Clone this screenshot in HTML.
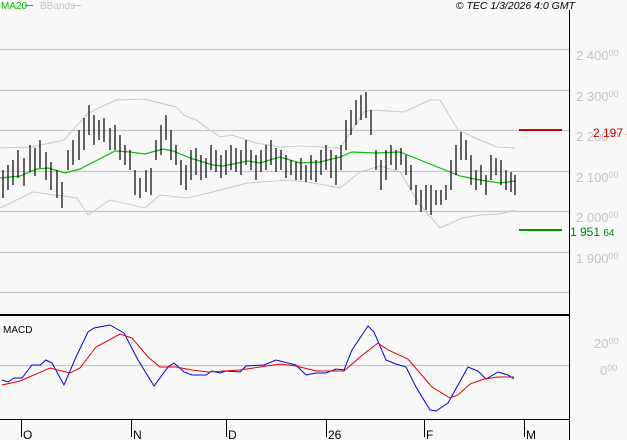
<!DOCTYPE html>
<html><head><meta charset="utf-8"><style>
body{margin:0;width:627px;height:440px;background:#f8f8f8;overflow:hidden;font-family:"Liberation Sans",sans-serif}
svg{position:absolute;left:0;top:0}
</style></head><body>
<svg width="627" height="440" viewBox="0 0 627 440">
<rect width="627" height="440" fill="#f8f8f8"/>
<g stroke="#c8c8c8" stroke-width="1.3">
<line x1="0" y1="49.5" x2="569" y2="49.5"/><line x1="0" y1="90.5" x2="569" y2="90.5"/>
<line x1="0" y1="130.5" x2="569" y2="130.5"/><line x1="0" y1="171.5" x2="569" y2="171.5"/>
<line x1="0" y1="211.5" x2="569" y2="211.5"/><line x1="0" y1="252.5" x2="569" y2="252.5"/>
<line x1="0" y1="292.5" x2="569" y2="292.5"/><line x1="0" y1="365.5" x2="569" y2="365.5"/>
</g>
<g fill="none" stroke="#c8c8c8" stroke-width="1">
<polyline points="0,148 32,147 64,140 88,113 116,100 144,99 160,103 176,107 184,115 196,120 220,137 232,135 256,143 280,147 304,146 340,148 350,133 364,112 372,110 404,112 430,100 440,100 458,130 480,140 497,147 515,148"/>
<polyline points="0,208 33,192 77,198 88,215 110,200 145,208 160,195 187,198 213,192 247,183 290,180 320,184 340,188 360,172 380,166 400,172 420,205 440,228 462,218 480,215 500,214 515,210"/>
</g>
<polyline fill="none" stroke="#11bb11" stroke-width="1.2" points="0,178 20,176 37,169 48,168 65,173 80,169 115,151 130,152 145,154 163,149 173,151 193,159 213,165 223,166 248,161 260,163 280,157 300,163 320,162 340,157 352,152 375,153 400,152 420,160 440,168 460,176 480,180 500,183 515,181"/>
<g stroke="#000" stroke-width="1.2" fill="none">
<path d="M3 170V198M8 165V190M13 160V185M18 150V178M24 158V186M30 145V172M35 148V176M40 140V168M46 152V180M51 162V190M57 170V198M62 182V208M68 150V170M73 140V165M79 130V160M84 118V150M89 105V135M94 115V145M99 120V140M104 118V142M110 128V150M115 125V150M120 135V160M125 145V165M130 150V170M135 170V195M140 178V198M146 170V192M151 168V195M156 140V160M161 125V155M166 115V140M171 130V160M176 145V165M181 160V185M186 165V190M191 150V180M196 148V175M201 155V180M206 158V178M211 145V170M216 150V172M221 155V178M226 150V175M231 145V170M236 148V172M241 150V175M246 140V165M251 150V170M256 155V180M261 150V172M266 145V170M271 140V165M276 148V172M281 150V170M286 155V178M291 160V175M296 162V180M301 158V180M306 165V182M311 155V180M316 160V182M321 150V175M326 145V170M331 150V178M336 155V185M341 145V170M346 120V150M351 110V135M356 100V125M361 95V120M366 92V118M371 110V135M376 150V170M381 160V190M386 150V180M391 145V165M396 150V170M401 148V165M406 155V175M411 165V190M416 185V205M421 190V212M426 185V210M431 185V215M436 190V205M441 190V205M446 185V200M451 160V190M456 145V175M461 132V160M466 140V160M471 155V185M476 170V190M481 165V185M486 175V195M491 155V180M496 158V175M501 160V185M506 170V190M511 172V192M515 175V195"/>
</g>
<line x1="519" y1="130" x2="562" y2="130" stroke="#cc0000" stroke-width="2"/>
<line x1="519" y1="230" x2="562" y2="230" stroke="#009900" stroke-width="2"/>
<line x1="569.5" y1="10" x2="569.5" y2="440" stroke="#000" stroke-width="1"/>
<line x1="0" y1="315" x2="569" y2="315" stroke="#000" stroke-width="2"/>
<line x1="0" y1="419.5" x2="569" y2="419.5" stroke="#000" stroke-width="1"/>
<polyline fill="none" stroke="#0000dd" stroke-width="1" points="2,380 8,382 14,378 22,378 32,365 40,365 46,360 52,363 64,385 76,357 88,332 94,328 110,325 124,333 138,360 154,386 168,367 174,363 184,372 192,375 206,375 212,371 220,373 226,371 240,372 246,366 264,365 276,360 288,363 296,365 306,375 316,373 326,373 336,369 344,370 352,350 368,326 374,332 386,360 396,364 406,367 416,387 430,410 436,411 448,403 468,367 478,371 486,379 498,372 508,375 514,379"/>
<polyline fill="none" stroke="#dd0000" stroke-width="1" points="2,385 20,381 50,368 70,373 80,368 96,347 120,334 132,338 148,357 160,367 176,367 192,370 208,372 240,370 280,364 296,366 316,371 344,371 360,357 378,343 388,350 408,359 432,387 450,398 458,395 470,384 484,379 498,377 514,377"/>
<g stroke="#000" stroke-width="1">
<line x1="21.5" y1="419" x2="21.5" y2="437"/><line x1="131.5" y1="419" x2="131.5" y2="437"/>
<line x1="226.5" y1="419" x2="226.5" y2="437"/><line x1="326.5" y1="419" x2="326.5" y2="437"/>
<line x1="424.5" y1="419" x2="424.5" y2="437"/><line x1="524.5" y1="419" x2="524.5" y2="437"/>
</g>
<g font-size="12" fill="#000">
<text x="23" y="439">O</text><text x="133" y="439">N</text><text x="228" y="439">D</text>
<text x="328" y="439">26</text><text x="426" y="439">F</text><text x="526" y="439">M</text>
</g>
<g font-size="13" fill="#c4c4c4">
<text x="576" y="60">2 400<tspan font-size="9" dy="-4">00</tspan></text>
<text x="576" y="101">2 300<tspan font-size="9" dy="-4">00</tspan></text>
<text x="576" y="141">2 200<tspan font-size="9" dy="-4">00</tspan></text>
<text x="576" y="182">2 100<tspan font-size="9" dy="-4">00</tspan></text>
<text x="576" y="222">2 000<tspan font-size="9" dy="-4">00</tspan></text>
<text x="576" y="263">1 900<tspan font-size="9" dy="-4">00</tspan></text>
<text x="594" y="348">20<tspan font-size="9" dy="-4">00</tspan></text>
<text x="600" y="375">0<tspan font-size="9" dy="-4">00</tspan></text>
</g>
<text x="593" y="137" font-size="12" fill="#cc0000">2 197 4</text>
<text x="570" y="236" font-size="12" fill="#008800">1 951 <tspan font-size="10">64</tspan></text>
<text x="3" y="333" font-size="10" fill="#000">MACD</text>
<text x="1" y="9" font-size="10" fill="#00bb00">MA20</text>
<line x1="25" y1="5.5" x2="33" y2="5.5" stroke="#00bb00"/>
<text x="40" y="9" font-size="10" fill="#c4c4c4">BBands</text>
<line x1="73" y1="5.5" x2="81" y2="5.5" stroke="#c4c4c4"/>
<text x="575" y="9" font-size="10.5" font-style="italic" fill="#000" text-anchor="end">© TEC 1/3/2026 4:0 GMT</text>
</svg>
</body></html>
